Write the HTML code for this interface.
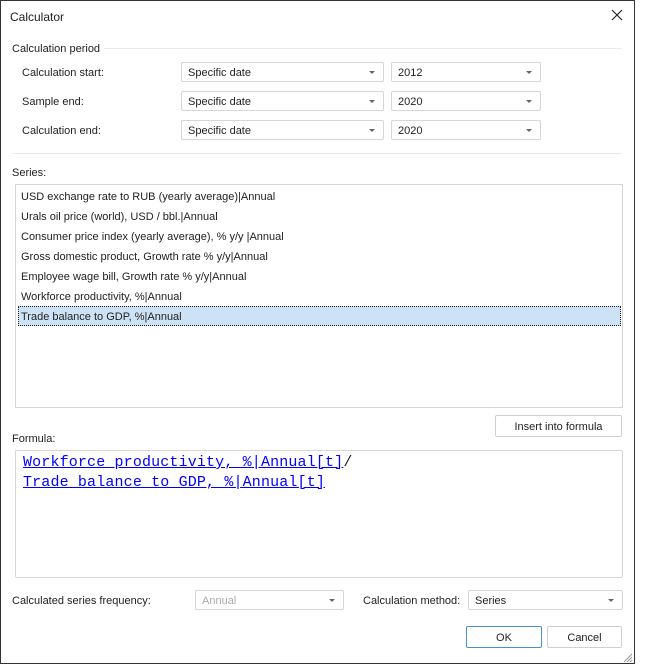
<!DOCTYPE html>
<html><head><style>
*{box-sizing:border-box;margin:0;padding:0}
body{width:648px;height:670px;background:#fff;position:relative;font-family:"Liberation Sans",sans-serif;font-size:11px;color:#222;overflow:hidden}
.dlg{position:absolute;left:0;top:0;width:635px;height:664px;border:1px solid #333;background:#fff}
.a{position:absolute;white-space:nowrap}
.cb{position:absolute;height:20px;border:1px solid #d6d6d6;border-radius:2px;background:#fff;padding:4px 0 0 6px;font-size:11px}
.cb:after{content:"";position:absolute;right:8px;top:8px;border-left:3px solid transparent;border-right:3px solid transparent;border-top:3px solid #666}
.btn{position:absolute;height:22px;border:1px solid #d0d0d0;border-radius:2px;background:#fff;text-align:center;padding-top:5px}
.ln{position:absolute;height:1px;background:#eaeaea}
.it{position:absolute;left:21px}
.f{position:absolute;left:23px;font-family:"Liberation Mono",monospace;font-size:15px;color:#00f;text-decoration:underline;letter-spacing:0.15px}
</style></head><body>
<div class="dlg"></div>
<div class="a" style="left:10px;top:10px;font-size:12px">Calculator</div>
<svg class="a" style="left:611px;top:9px" width="12" height="12"><path d="M1 1L11 11M11 1L1 11" stroke="#222" stroke-width="1.2"/></svg>
<div class="ln" style="left:90px;top:48px;width:532px"></div>
<div class="a" style="left:12px;top:43px;background:#fff;padding-right:4px">Calculation period</div>
<div class="a" style="left:22px;top:67px">Calculation start:</div>
<div class="a" style="left:22px;top:96px">Sample end:</div>
<div class="a" style="left:22px;top:125px">Calculation end:</div>
<div class="cb" style="left:181px;top:62px;width:203px">Specific date</div>
<div class="cb" style="left:391px;top:62px;width:150px">2012</div>
<div class="cb" style="left:181px;top:91px;width:203px">Specific date</div>
<div class="cb" style="left:391px;top:91px;width:150px">2020</div>
<div class="cb" style="left:181px;top:120px;width:203px">Specific date</div>
<div class="cb" style="left:391px;top:120px;width:150px">2020</div>
<div class="ln" style="left:12px;top:153px;width:610px"></div>
<div class="a" style="left:12px;top:167px">Series:</div>
<div class="a" style="left:15px;top:184px;width:608px;height:224px;border:1px solid #d6d6d6"></div>
<div class="a" style="left:18px;top:306px;width:603px;height:20px;background:#cde3f5;border:1px dotted #222"></div>
<div class="it" style="top:191px">USD exchange rate to RUB (yearly average)|Annual</div>
<div class="it" style="top:211px">Urals oil price (world), USD / bbl.|Annual</div>
<div class="it" style="top:231px">Consumer price index (yearly average), % y/y |Annual</div>
<div class="it" style="top:251px">Gross domestic product, Growth rate % y/y|Annual</div>
<div class="it" style="top:271px">Employee wage bill, Growth rate % y/y|Annual</div>
<div class="it" style="top:291px">Workforce productivity, %|Annual</div>
<div class="it" style="top:311px">Trade balance to GDP, %|Annual</div>
<div class="btn" style="left:495px;top:415px;width:127px">Insert into formula</div>
<div class="a" style="left:12px;top:433px">Formula:</div>
<div class="a" style="left:15px;top:450px;width:608px;height:128px;border:1px solid #d6d6d6;border-radius:2px"></div>
<div class="f" style="top:454px">Workforce productivity, %|Annual[t]<span style="color:#222;text-decoration:none;display:inline-block">/</span></div>
<div class="f" style="top:474px">Trade balance to GDP, %|Annual[t]</div>
<div class="a" style="left:12px;top:595px">Calculated series frequency:</div>
<div class="cb" style="left:195px;top:590px;width:149px;color:#aaa">Annual</div>
<div class="a" style="left:363px;top:595px">Calculation method:</div>
<div class="cb" style="left:468px;top:590px;width:155px">Series</div>
<div class="btn" style="left:466px;top:626px;width:76px;border-color:#4a8fd0">OK</div>
<div class="btn" style="left:547px;top:626px;width:75px">Cancel</div>
<svg class="a" style="left:622px;top:652px" width="11" height="11"><path d="M10 2L2 10M10 5L5 10M10 8L8 10" stroke="#999" stroke-width="1"/></svg>
</body></html>
